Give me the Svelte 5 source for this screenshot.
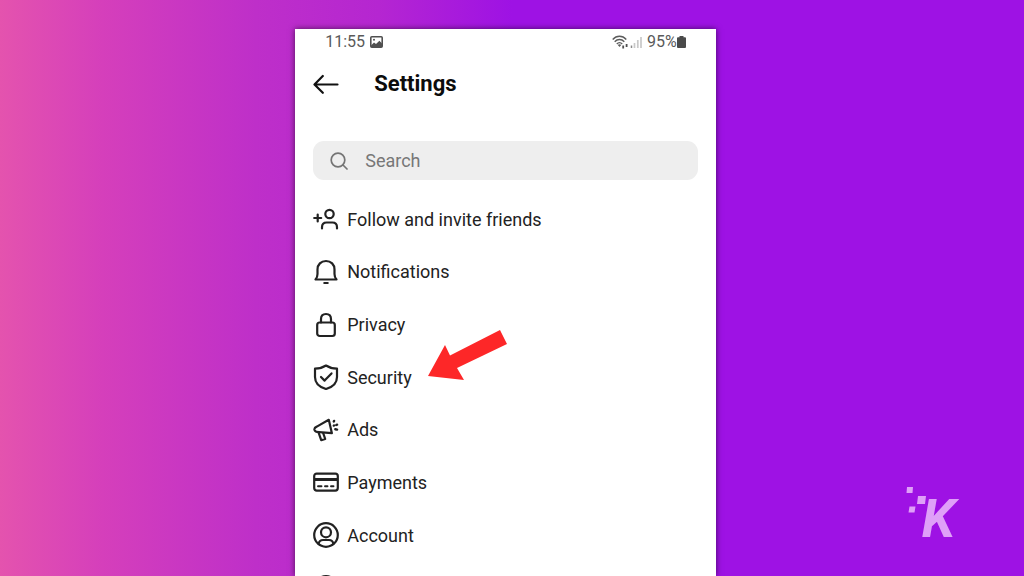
<script lang="ts">
  type SettingsItem = {
    icon: string;
    label: string;
  };

  const items: SettingsItem[] = [
    { icon: 'follow', label: 'Follow and invite friends' },
    { icon: 'bell', label: 'Notifications' },
    { icon: 'lock', label: 'Privacy' },
    { icon: 'shield', label: 'Security' },
    { icon: 'ads', label: 'Ads' },
    { icon: 'card', label: 'Payments' },
    { icon: 'account', label: 'Account' },
    { icon: 'circle', label: '' },
  ];

  let query = $state('');
</script>

<div class="page">
  <main class="phone">
    <div class="status">
      <span>11:55</span>
      <svg class="status-photo" width="13" height="12" viewBox="0 0 13 12" aria-hidden="true">
        <rect x="0.8" y="0.8" width="11.4" height="10.4" rx="1" fill="none" stroke="#505050" stroke-width="1.6" />
        <path d="M1 9.5 4 6.5l2 1.6 3.4-3.4L12 7.5V11H1z" fill="#505050" />
        <circle cx="4" cy="3.8" r="1" fill="#505050" />
      </svg>
      <svg class="status-signal" width="31" height="14" viewBox="0 0 31 14" aria-hidden="true">
        <g fill="none" stroke="#5c5c5c" stroke-width="1.4">
          <path d="M0.7 4.4C4.6.2 10.4.2 14.3 4.4" />
          <path d="M2.7 6.7c2.8-3 6.8-3 9.6 0" />
          <path d="M4.8 9c1.6-1.8 3.8-1.8 5.4 0" />
        </g>
        <path d="m5.8 10.1 1.7 2 1.7-2c-1-1-2.4-1-3.4 0z" fill="#5c5c5c" />
        <path d="M11.2 10.5v3M14.6 9v3" stroke="#505050" stroke-width="1.8" />
        <path d="M19.5 10.500v2.500" stroke="#8a8a8a" stroke-width="1.5" />
        <path d="M22.5 8V13M25.8 5V13M29 2v11" stroke="#c8c8c8" stroke-width="1.7" />
      </svg>
      <span>95%</span>
      <svg width="9" height="12" viewBox="0 0 9 12" aria-hidden="true">
        <path d="M2.500 0h4v1.200H8q1 0 1 1V11q0 1-1 1H1q-1 0-1-1V2.200q0-1 1-1h1.500z" fill="#4a4a4a" />
      </svg>
    </div>

    <header class="header">
      <button class="back" type="button" aria-label="Back">
        <svg width="26" height="20" viewBox="0 0 26 20" fill="none" stroke="#111" stroke-width="2.2" stroke-linecap="round" stroke-linejoin="round">
          <path d="M24.5 10.5H2M9.8 2 1.5 10.5l8.300 8.300" />
        </svg>
      </button>
      <h1>Settings</h1>
    </header>

    <label class="search">
      <svg width="18" height="18" viewBox="0 0 18 18" fill="none" stroke="#747474" stroke-width="1.7" stroke-linecap="round" aria-hidden="true">
        <circle cx="8" cy="8" r="6.8" />
        <path d="m13 13 4 4" />
      </svg>
      <input type="text" placeholder="Search" aria-label="Search" bind:value={query} />
    </label>

    <ul class="menu">
      {#each items as item}
        <li>
          <button class="item" type="button" aria-label={item.label || undefined}>
            <svg class="icon" width="26" height="26" viewBox="0 0 26 26" aria-hidden="true">
              {#if item.icon === 'follow'}
                <circle cx="16.5" cy="8" r="4.2" />
                <path d="M9 22.500v-1.300c0-3 2-4.700 4.600-4.700h5.800c2.600 0 4.600 1.700 4.600 4.700v1.300M1.200 12h7M4.700 8.500v7" />
              {:else if item.icon === 'bell'}
                <path d="M2.500 20.500h21c-1.400-1.600-2-3.200-2-5.500v-4.500C21.500 5.500 18 2 13 2s-8.500 3.500-8.500 8.500V15c0 2.300-.6 3.900-2 5.500z" />
                <path d="M11.300 24h3.400" />
              {:else if item.icon === 'lock'}
                <rect x="4.2" y="10.500" width="17.600" height="13.500" rx="2.5" />
                <path d="M8 10.500V7c0-3 2-5 5-5s5 2 5 5v3.500" />
              {:else if item.icon === 'shield'}
                <path d="M13 1.500c3 2 6.500 3 11 3.200V13c0 6-4 10-11 12C6 23 2 19 2 13V4.700C6.500 4.500 10 3.500 13 1.500z" />
                <path d="m8 13 3.600 3.600 6.900-7.200" />
              {:else if item.icon === 'ads'}
                <path d="M15.800 2.800 18.900 16.200 6 15.200c-2.500-.1-4-.6-4.500-2.200-.4-1.500.5-2.700 2.300-3.400z" />
                <path d="m5.700 15.800 2.500 7.400 4-1.200-2-5.800" />
                <path d="m20.800 4.500.3-.6M23.300 8l.8-.3M22.300 12.300l1.800.3M20.800 8.600l.2-.1" stroke-width="2.4" />
              {:else if item.icon === 'card'}
                <rect x="1.200" y="4.600" width="23.600" height="17" rx="2.500" />
                <path d="M1.500 10.500h23" stroke-width="3" stroke-linecap="butt" />
                <path d="M5 17.300h3.500M12 17.300h2.500M18 17.300h2.500" stroke-width="1.900" />
              {:else if item.icon === 'account'}
                <circle cx="13" cy="13" r="11.800" />
                <circle cx="13" cy="10.300" r="5" />
                <path d="M5.500 22c.5-2.500 2.300-4 4.500-4h6c2.200 0 4 1.500 4.500 4" />
              {:else}
                <circle cx="13" cy="13" r="11.800" />
              {/if}
            </svg>
            {#if item.label}
              <span>{item.label}</span>
            {/if}
            {#if item.icon === 'shield'}
              <svg class="pointer" width="80" height="52" viewBox="0 0 80 52" aria-hidden="true">
                <path d="M1 47 18 16l5 10.500L73 1l7 14-50 24 7 12z" fill="#fd2728" />
              </svg>
            {/if}
          </button>
        </li>
      {/each}
    </ul>
  </main>

  <div class="brand">
    <svg width="20" height="30" viewBox="0 0 20 30" fill="#dfa0f8" aria-hidden="true">
      <path d="M1 1h6L6.500 7H.500zM12 10h8l-1 8h-8zM3.500 20.500h6l-1 6H2.500z" />
    </svg>
    <span>K</span>
  </div>
</div>

<style>
  :global(body) {
    margin: 0;
  }

  .page {
    position: relative;
    display: flex;
    justify-content: center;
    box-sizing: border-box;
    height: 100vh;
    overflow: hidden;
    padding-top: 29px;
    padding-right: 13px;
    background: linear-gradient(to right, #e453ae 0%, #d53fbb 10%, #be2fc9 25%, #b526d1 37%, #9e12e4 50%, #9e12e4 100%);
    font-family: Roboto, "Liberation Sans", sans-serif;
  }

  .phone {
    box-sizing: border-box;
    width: 41.6%;
    min-width: 360px;
    flex-shrink: 0;
    padding: 0 18px;
    background: #fff;
    box-shadow: 0 0 6px rgba(0, 0, 0, 0.6);
  }

  .status {
    display: flex;
    align-items: center;
    height: 25px;
    padding: 0 12px;
    color: #5a5a5a;
    font-size: 16px;
  }

  .status-photo {
    margin-left: 5px;
  }

  .status-signal {
    margin: 0 4px 0 auto;
  }

  .header {
    display: flex;
    align-items: center;
    gap: 35px;
    height: 59px;
  }

  button {
    padding: 0;
    border: 0;
    background: none;
    font: inherit;
    cursor: pointer;
  }

  .back {
    display: flex;
  }

  h1 {
    margin: 0;
    color: #0c0c0c;
    font-size: 22px;
    font-weight: 700;
  }

  .search {
    display: flex;
    align-items: center;
    gap: 17px;
    height: 39px;
    margin-top: 28px;
    padding: 0 17px;
    border-radius: 11px;
    background: #eee;
  }

  .search input {
    flex: 1;
    min-width: 0;
    padding: 0;
    border: 0;
    outline: 0;
    background: none;
    color: #222;
    font: inherit;
    font-size: 18px;
  }

  .search input::placeholder {
    color: #777;
    opacity: 1;
  }

  .menu {
    display: grid;
    grid-auto-rows: 1fr;
    min-height: 421px;
    margin: 13px 0 0;
    padding: 0;
    list-style: none;
  }

  .menu li {
    display: flex;
  }

  .item {
    position: relative;
    display: flex;
    align-items: center;
    gap: 8px;
    color: #222;
    font-size: 18px;
  }

  .icon {
    fill: none;
    stroke: #222;
    stroke-width: 2.2;
    stroke-linecap: round;
    stroke-linejoin: round;
  }

  .pointer {
    position: absolute;
    top: -22px;
    left: calc(100% + 15px);
  }

  .brand {
    position: absolute;
    right: 69px;
    bottom: 24px;
    display: flex;
    align-items: flex-start;
    color: #dfa0f8;
    font-size: 54px;
    font-style: italic;
    font-weight: 700;
    line-height: 66px;
  }

  .brand span {
    margin-left: -4px;
  }
</style>
